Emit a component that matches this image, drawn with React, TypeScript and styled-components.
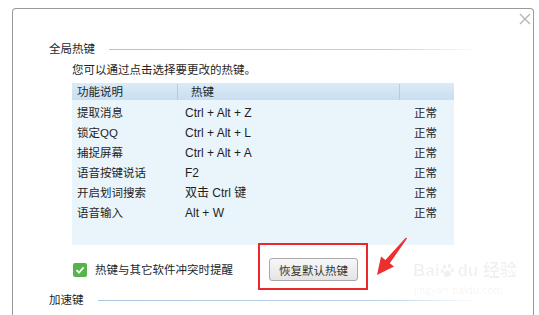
import React from "react";
import styled, { createGlobalStyle } from "styled-components";

const GlobalStyle = createGlobalStyle`
  html, body {
    margin: 0;
    padding: 0;
    background: #fff;
    overflow: hidden;
  }
  body {
    font-family: "Liberation Sans", "Noto Sans CJK SC", sans-serif;
    font-size: 11.5px;
    color: #1f1f1f;
  }
`;

const Page = styled.div`
  width: 539px;
  height: 315px;
  padding: 8px 0 0 12px;
  box-sizing: border-box;
  overflow: hidden;
`;

const Dialog = styled.div`
  position: relative;
  width: 522px;
  height: 330px;
  box-sizing: border-box;
  background: #fff;
  border: 1px solid #999;
  border-bottom: none;
  border-radius: 4px 4px 0 0;
  padding: 32px 0 0 36px;
`;

const Close = styled.button`
  position: absolute;
  top: 4px;
  right: 2px;
  width: 12px;
  height: 12px;
  padding: 0;
  border: none;
  background: none;
  display: flex;
`;

const SectionHead = styled.div<{ $top?: number }>`
  display: flex;
  align-items: center;
  width: 431px;
  height: 16px;
  margin-top: ${(p) => p.$top ?? 0}px;
`;

const SectionTitle = styled.span`
  line-height: 16px;
  white-space: nowrap;
  margin-right: 14px;
`;

const SectionLine = styled.div`
  flex: 1;
  height: 1px;
  background: linear-gradient(to right, #a9c7e2 0%, #b9d3ea 75%, rgba(255, 255, 255, 0) 100%);
`;

const Indent = styled.div`
  padding-left: 23px;
`;

const Hint = styled.div`
  line-height: 16px;
  margin: 5px 0;
`;

const Table = styled.div`
  width: 382px;
  background: #eaf4fb;
`;

const HeadRow = styled.div`
  display: grid;
  grid-template-columns: 106px 222px 1fr;
  height: 17px;
  align-items: center;
  background: linear-gradient(to bottom, #dbeaf6, #c9def0);
`;

const HeadCell = styled.div<{ $pad: number; $sep?: boolean }>`
  padding-left: ${(p) => p.$pad}px;
  line-height: 16px;
  height: 16px;
  border-right: ${(p) => (p.$sep ? "1px solid #b3cde3" : "none")};
`;

const Body = styled.div`
  padding: 3px 0 22px;
`;

const Row = styled.div`
  display: grid;
  grid-template-columns: 113px 229px 1fr;
  height: 20px;
  align-items: center;
`;

const Cell = styled.div<{ $pad?: number }>`
  padding-left: ${(p) => p.$pad ?? 0}px;
  white-space: nowrap;
  line-height: 16px;
`;

const Keys = styled(Cell)`
  font-size: 12px;
`;

const ActionRow = styled.div`
  display: flex;
  align-items: center;
  height: 23px;
  margin-top: 13px;
`;

const Check = styled.span`
  width: 14px;
  height: 14px;
  border-radius: 2px;
  background: #56b44b;
  display: flex;
  align-items: center;
  justify-content: center;
  margin: 0 8px 0 1px;
`;

const CheckLabel = styled.span`
  line-height: 16px;
`;

const ButtonWrap = styled.div`
  position: relative;
  margin-left: 36px;
`;

const Button = styled.button`
  width: 89px;
  height: 23px;
  padding: 0;
  font-family: inherit;
  font-size: 11.5px;
  color: #333;
  border: 1px solid #a9a9a9;
  border-radius: 3px;
  background: linear-gradient(to bottom, #f7f7f7, #e4e4e4);
`;

const Marker = styled.div`
  position: absolute;
  top: -15px;
  left: -11px;
  right: -10px;
  bottom: -9px;
  border: 2px solid #e8282b;
  pointer-events: none;
`;

const Arrow = styled.svg`
  position: absolute;
  left: 104px;
  top: -23px;
`;

const Watermark = styled.div`
  position: absolute;
  left: 400px;
  top: 250px;
  color: rgba(0, 0, 0, 0.06);
  white-space: nowrap;
  display: flex;
  flex-direction: column;
  align-items: flex-start;
  pointer-events: none;
`;

const MarkTop = styled.div`
  display: flex;
  align-items: center;
  font-size: 17px;
  font-weight: bold;
  line-height: 24px;
`;

const MarkUrl = styled.div`
  font-size: 11px;
  line-height: 14px;
  margin-left: 1px;
`;

const rows = [
  ["提取消息", "Ctrl + Alt + Z"],
  ["锁定QQ", "Ctrl + Alt + L"],
  ["捕捉屏幕", "Ctrl + Alt + A"],
  ["语音按键说话", "F2"],
  ["开启划词搜索", "双击 Ctrl 键"],
  ["语音输入", "Alt + W"],
];

export default function App() {
  return (
    <>
      <GlobalStyle />
      <Page>
        <Dialog>
          <Close aria-label="关闭">
            <svg width="12" height="12" viewBox="0 0 12 12">
              <path d="M1 1 L11 11 M11 1 L1 11" stroke="#b5b5b5" strokeWidth="1.4" />
            </svg>
          </Close>

          <SectionHead>
            <SectionTitle>全局热键</SectionTitle>
            <SectionLine />
          </SectionHead>

          <Indent>
            <Hint>您可以通过点击选择要更改的热键。</Hint>
            <Table>
              <HeadRow>
                <HeadCell $pad={5} $sep>功能说明</HeadCell>
                <HeadCell $pad={13} $sep>热键</HeadCell>
                <HeadCell $pad={0} />
              </HeadRow>
              <Body>
                {rows.map(([name, key]) => (
                  <Row key={name}>
                    <Cell $pad={5}>{name}</Cell>
                    <Keys>{key}</Keys>
                    <Cell>正常</Cell>
                  </Row>
                ))}
              </Body>
            </Table>

            <ActionRow>
              <Check>
                <svg width="10" height="10" viewBox="0 0 10 10">
                  <path d="M1.5 5.2 L4 7.6 L8.6 2.4" stroke="#fff" strokeWidth="1.8" fill="none" />
                </svg>
              </Check>
              <CheckLabel>热键与其它软件冲突时提醒</CheckLabel>
              <ButtonWrap>
                <Button>恢复默认热键</Button>
                <Marker />
                <Arrow width="40" height="44" viewBox="0 0 40 44">
                  <polygon
                    points="34,3.6 16.8,28.2 21,31.6 4,40 8,21.6 12.4,25 33,2.4"
                    fill="#ec2f2f"
                  />
                </Arrow>
              </ButtonWrap>
            </ActionRow>
          </Indent>

          <SectionHead $top={11}>
            <SectionTitle>加速键</SectionTitle>
            <SectionLine />
          </SectionHead>

          <Watermark>
            <MarkTop>
              Bai
              <svg width="16" height="16" viewBox="0 0 22 22" style={{ margin: "0 1px" }}>
                <g fill="rgba(0,0,0,0.06)">
                  <ellipse cx="6" cy="5" rx="2.4" ry="3" />
                  <ellipse cx="13" cy="4" rx="2.4" ry="3" />
                  <ellipse cx="3" cy="11" rx="2.2" ry="2.8" />
                  <ellipse cx="17" cy="10" rx="2.2" ry="2.8" />
                  <path d="M10 10 C6 10 4 16 6 18 C8 20 12 19 14 18 C16 16 14 10 10 10 Z" />
                </g>
              </svg>
              du 经验
            </MarkTop>
            <MarkUrl>jingyan.baidu.com</MarkUrl>
          </Watermark>
        </Dialog>
      </Page>
    </>
  );
}
